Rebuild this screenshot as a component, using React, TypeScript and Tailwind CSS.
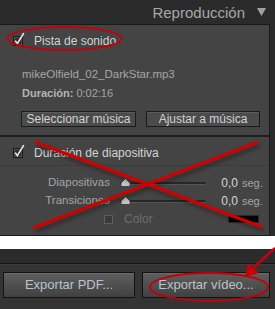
import React from "react";

function Check() {
  return (
    <svg width="12" height="14" viewBox="0 0 12 14" className="shrink-0">
      <rect x="0.5" y="4.5" width="9" height="9" fill="#6a6a6a" stroke="#1a1a1a" />
      <rect x="1.5" y="5.5" width="7" height="7" fill="#2e2e2e" />
      <path d="M2.2 8.6 L4.3 11.6 L10.8 1.2" fill="none" stroke="#ededed" strokeWidth="1.6" />
    </svg>
  );
}

function Slider() {
  return (
    <div className="relative w-[86px] h-[10px]">
      <div className="absolute left-0 right-0 top-[4px] h-[3px] rounded-full bg-[#262626] border-b border-[#555]" />
      <svg width="11" height="9" viewBox="0 0 11 9" className="absolute left-[0px] top-[0px]">
        <path d="M5.5 0.5 L10 5 L10 8.5 L1 8.5 L1 5 Z" fill="#c4c4c4" stroke="#333" strokeWidth="0.8" />
      </svg>
    </div>
  );
}

function Btn({ children, w }: { children: React.ReactNode; w: string }) {
  return (
    <div
      className={`${w} h-[16px] flex items-center justify-center border border-[#1b1b1b] bg-[#4b4b4b] text-[12px] text-[#d2d2d2] shadow-[inset_0_1px_0_#5c5c5c]`}
    >
      {children}
    </div>
  );
}

function BigBtn({ children, w }: { children: React.ReactNode; w: string }) {
  return (
    <div
      className={`${w} h-[26px] flex items-center justify-center border border-[#121212] bg-gradient-to-b from-[#5e5e5e] to-[#414141] text-[13px] text-[#b9c4cf] shadow-[inset_0_1px_0_#6a6a6a]`}
    >
      {children}
    </div>
  );
}

export default function App() {
  return (
    <div
      className="relative w-[275px] h-[309px] overflow-hidden bg-white"
      style={{ fontFamily: '"Liberation Sans", Arial, sans-serif' }}
    >
      {/* upper area */}
      <div className="bg-[#2b2b2b] h-[236px] flex flex-col">
        <div className="h-[24px] flex items-center justify-end pr-[9px] gap-[12px]">
          <span className="text-[15px] text-[#a8a8a8] leading-none">Reproducción</span>
          <svg width="9" height="8" viewBox="0 0 9 8">
            <path d="M0 0 L9 0 L4.5 8 Z" fill="#a2a2a2" />
          </svg>
        </div>
        <div className="w-[270px] h-[212px] border-t border-r border-b border-[#1a1a1a] bg-[#444444] flex flex-col">
          {/* section 1 */}
          <div className="h-[112px] border-b-2 border-[#1f1f1f] flex flex-col">
            <div className="h-[27px] flex items-center pl-[13px] gap-[9px] pt-[1px]">
              <Check />
              <span className="text-[12px] text-[#d4d4d4] leading-none mt-[3px]">Pista de sonido</span>
            </div>
            <div className="pl-[22px] mt-[15px] h-[14px] text-[11.5px] leading-[14px] text-[#a6a6a6]">
              mikeOlfield_02_DarkStar.mp3
            </div>
            <div className="pl-[22px] mt-[5px] h-[14px] text-[11px] leading-[14px] text-[#a6a6a6]">
              <span className="font-bold text-[#b4b4b4]">Duración:</span> 0:02:16
            </div>
            <div className="flex pl-[21px] mt-[11px] gap-[10px]">
              <Btn w="w-[115px]">Seleccionar música</Btn>
              <Btn w="w-[114px]">Ajustar a música</Btn>
            </div>
          </div>
          {/* section 2 header */}
          <div className="h-[29px] border-b border-[#3c3c3c] flex items-center pl-[13px] gap-[9px]">
            <Check />
            <span className="text-[12px] text-[#d4d4d4] leading-none mt-[3px]">Duración de diapositiva</span>
          </div>
          {/* sliders */}
          <div className="flex flex-col pt-[8px]">
            <div className="h-[18px] flex items-center">
              <span className="w-[110px] text-right text-[11.5px] text-[#a4a4a4]">Diapositivas</span>
              <div className="ml-[10px]"><Slider /></div>
              <span className="w-[32px] text-right text-[12px] text-[#d6d6d6]">0,0</span>
              <span className="ml-[4px] text-[11px] text-[#a4a4a4]">seg.</span>
            </div>
            <div className="h-[18px] flex items-center">
              <span className="w-[110px] text-right text-[11.5px] text-[#a4a4a4]">Transiciones</span>
              <div className="ml-[10px]"><Slider /></div>
              <span className="w-[32px] text-right text-[12px] text-[#d6d6d6]">0,0</span>
              <span className="ml-[4px] text-[11px] text-[#a4a4a4]">seg.</span>
            </div>
            <div className="h-[18px] flex items-center">
              <div className="ml-[104px] w-[9px] h-[9px] border border-[#5e5e5e] bg-[#3a3a3a]" />
              <span className="ml-[11px] text-[12px] text-[#6c6c6c]">Color</span>
              <div className="ml-[75px] w-[31px] h-[8px] bg-black border border-[#2a2a2a]" />
            </div>
          </div>
        </div>
      </div>
      {/* white gap */}
      <div className="h-[13px] bg-white" />
      {/* bottom panel */}
      <div className="h-[60px] bg-[#343434] flex flex-col">
        <div className="h-[15px] bg-[#2b2b2b] border-b border-[#151515]" />
        <div className="h-[1px] bg-[#3d3d3d]" />
        <div className="flex pl-[3px] gap-[7px] mt-[7px]">
          <BigBtn w="w-[132px]">Exportar PDF...</BigBtn>
          <BigBtn w="w-[128px]">Exportar vídeo...</BigBtn>
        </div>
      </div>

      {/* annotations overlay */}
      <svg
        className="absolute left-0 top-0 pointer-events-none"
        width="275"
        height="309"
        viewBox="0 0 275 309"
      >
        <defs>
          <filter id="sh" x="-10%" y="-10%" width="120%" height="130%">
            <feDropShadow dx="2" dy="3" stdDeviation="2" floodColor="#000" floodOpacity="0.45" />
          </filter>
        </defs>
        <ellipse cx="64.5" cy="38.5" rx="57" ry="11.5" fill="none" stroke="#c3000c" strokeWidth="2" />
        <g filter="url(#sh)">
          <line x1="35" y1="142" x2="262" y2="227" stroke="#d10000" strokeWidth="3" />
          <line x1="258" y1="142" x2="33" y2="228" stroke="#d10000" strokeWidth="3" />
        </g>
        <line x1="275" y1="248" x2="251" y2="270" stroke="#c8000a" strokeWidth="2.5" />
        <path d="M245 277 L248 263 L259 273 Z" fill="#c8000a" />
        <ellipse cx="209" cy="287" rx="59" ry="14" fill="none" stroke="#c3000c" strokeWidth="2" />
      </svg>
    </div>
  );
}
